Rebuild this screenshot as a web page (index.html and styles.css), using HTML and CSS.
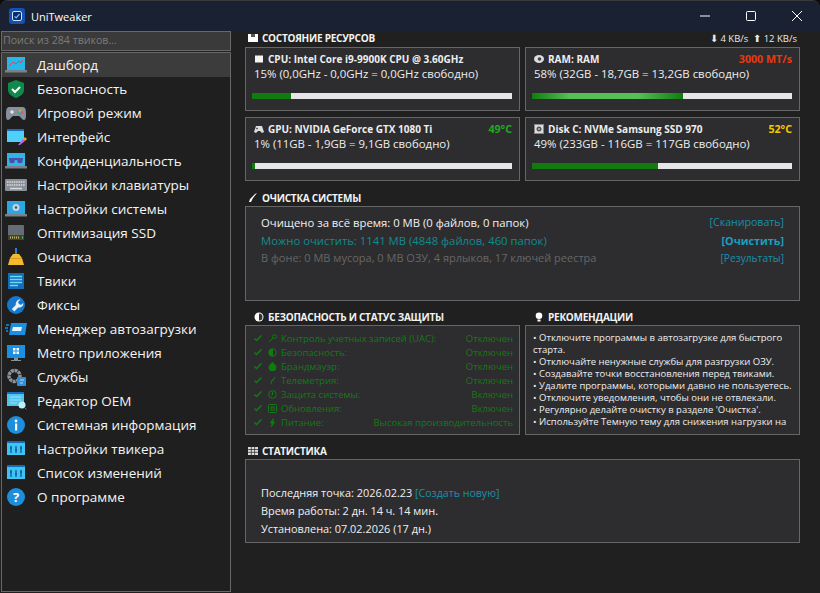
FILE: index.html
```html
<!DOCTYPE html>
<html lang="ru">
<head>
<meta charset="utf-8">
<title>UniTweaker</title>
<link rel="stylesheet" href="styles.css">
</head>
<body>
<div class="window">
  <header class="titlebar">
    <svg class="app-icon" viewBox="0 0 16 16"><rect width="16" height="16" rx="3" fill="#1552b0"/><rect x="3.5" y="3.5" width="9" height="9" rx="1.5" fill="#0d2a66" stroke="#cfe4ff"/><path d="M5.5 8.5l1.7 1.5 3.3-4" fill="none" stroke="#6fc0ff" stroke-width="1.2"/></svg>
    <span class="app-name">UniTweaker</span>
    <div class="controls">
      <button class="ctl"><svg viewBox="0 0 12 12" width="12" height="12"><path d="M1 6h10" stroke="#fff"/></svg></button>
      <button class="ctl"><svg viewBox="0 0 12 12" width="12" height="12"><rect x="1.5" y="1.5" width="9" height="9" rx="1" fill="none" stroke="#fff"/></svg></button>
      <button class="ctl"><svg viewBox="0 0 12 12" width="12" height="12"><path d="M1 1l10 10M11 1L1 11" stroke="#fff"/></svg></button>
    </div>
  </header>
  <div class="app-body">
    <aside class="sidebar">
      <div class="search">Поиск из 284 твиков...</div>
      <nav class="nav">
        <a class="nav-item active"><svg class="ni" viewBox="0 0 22 18"><rect x="2" y="1" width="18" height="13" fill="#29b6e8"/><path d="M4 10l4-4 3 2 3-3 2 2 2-3" fill="none" stroke="#d04a6a" stroke-width="1"/><rect y="14" width="22" height="2.500" fill="#78808a"/></svg>Дашборд</a>
        <a class="nav-item"><svg class="ni" viewBox="0 0 22 18"><path d="M11 0l8 3v7c0 4-4 6.500-8 8-4-1.500-8-4-8-8V3z" fill="#0f8a4c"/><path d="M7 9l3 3 5-5" fill="none" stroke="#fff" stroke-width="2"/></svg>Безопасность</a>
        <a class="nav-item"><svg class="ni" viewBox="0 0 22 18"><path d="M4 3h14c2 0 3 2 3 6s0 7-2 7-3-3-5-4H8c-2 1-3 4-5 4s-2-3-2-7 1-6 3-6z" fill="#87909c"/><path d="M5 8h4M7 6v4" stroke="#fff"/><circle cx="15" cy="6.500" r="1" fill="#e8b030"/><circle cx="17" cy="8.500" r="1" fill="#e0503c"/><circle cx="13" cy="8.500" r="1" fill="#3cb060"/><circle cx="15" cy="10" r="1" fill="#3c90e0"/></svg>Игровой режим</a>
        <a class="nav-item"><svg class="ni" viewBox="0 0 22 18"><rect x="2" y="1" width="17" height="13" fill="#4fd0f8"/><rect x="2" y="1" width="17" height="2" fill="#1a6fc0"/><path d="M13 17l5-6 2 2-5 4z" fill="#c060e0"/><path d="M18 11l2-2 2 2-2 2z" fill="#f0a020"/></svg>Интерфейс</a>
        <a class="nav-item"><svg class="ni" viewBox="0 0 22 18"><rect x="2" y="1" width="18" height="13" fill="#2fb4e4"/><path d="M4 6h14v1l-1 4h-4l-1-3h-2l-1 3H5L4 7z" fill="#4a4ea8"/><rect y="14" width="22" height="2.500" fill="#78808a"/></svg>Конфиденциальность</a>
        <a class="nav-item"><svg class="ni" viewBox="0 0 22 18"><rect y="3" width="22" height="12" rx="1" fill="#8a9098"/><path d="M2 6h18M2 9h18" stroke="#d8dce0" stroke-dasharray="1.500 .8" stroke-width="1.500"/><path d="M5 12.500h12" stroke="#d8dce0" stroke-width="1.500"/></svg>Настройки клавиатуры</a>
        <a class="nav-item"><svg class="ni" viewBox="0 0 22 18"><rect x="2" y="1" width="18" height="13" fill="#2aa6e0"/><circle cx="11" cy="7.500" r="3.500" fill="#c8d4e0"/><circle cx="11" cy="7.500" r="1.300" fill="#3a5a80"/><rect y="14" width="22" height="2.500" fill="#78808a"/></svg>Настройки системы</a>
        <a class="nav-item"><svg class="ni" viewBox="0 0 22 18"><rect x="3" y="1" width="16" height="15" rx="1" fill="#666c74"/><rect x="3" y="11" width="16" height="5" fill="#3e4248"/><path d="M5 13.500h10" stroke="#c8c040" stroke-width="2" stroke-dasharray="1 1"/><path d="M17 13.500h1" stroke="#50d050" stroke-width="2"/></svg>Оптимизация SSD</a>
        <a class="nav-item"><svg class="ni" viewBox="0 0 22 18"><rect x="10" y="0" width="2" height="7" fill="#2f7fd0"/><path d="M8 6h6l3 4 2 7H3l2-7z" fill="#f4bc2c"/><path d="M5 10.500h12" stroke="#d89a18"/></svg>Очистка</a>
        <a class="nav-item"><svg class="ni" viewBox="0 0 22 18"><rect x="3" y="1" width="16" height="16" fill="#0f6fb8"/><path d="M5 4.500h12M5 7.500h12M5 10.500h12M5 13.500h8" stroke="#6fd4ff" stroke-width="1.500"/></svg>Твики</a>
        <a class="nav-item"><svg class="ni" viewBox="0 0 22 18"><circle cx="11" cy="9" r="9" fill="#1478cc"/><path d="M15.500 3.500l-2.500 2.500 1 2 2 1 2.300-2c.3 3-2.300 5-5 4.500l-4 4-2.500-2.500 4-4c-.5-3 2-6 4.700-5.500z" fill="#e8f0f8"/></svg>Фиксы</a>
        <a class="nav-item"><svg class="ni" viewBox="0 0 22 18"><path d="M6 3h16l-2 12H4z" fill="#1b8fe0"/><path d="M8 7h9l-1 4H7z" fill="#e8f4ff"/><path d="M1 5h3M0 8h3M1 11h2" stroke="#1b8fe0" stroke-width="1.300"/></svg>Менеджер автозагрузки</a>
        <a class="nav-item"><svg class="ni" viewBox="0 0 22 18"><rect x="2" y="1" width="18" height="13" fill="#1b8fe0"/><path d="M8 4h2.500v2.500H8zM11.500 4H14v2.500h-2.500zM8 7.500h2.500V10H8zM11.500 7.500H14V10h-2.500z" fill="#fff"/><rect x="9" y="14" width="4" height="2" fill="#8a9098"/><rect x="6" y="16" width="10" height="1" fill="#8a9098"/></svg>Metro приложения</a>
        <a class="nav-item"><svg class="ni" viewBox="0 0 22 18"><circle cx="9.500" cy="8" r="5.500" fill="none" stroke="#8a929c" stroke-width="3.500" stroke-dasharray="3 .6"/><rect x="12" y="9" width="9" height="9" rx="1" fill="#2f8fd8"/><path d="M15 12h4M15 15h3" stroke="#a8dcff"/></svg>Службы</a>
        <a class="nav-item"><svg class="ni" viewBox="0 0 22 18"><rect x="2" y="0" width="17" height="14" fill="#4fc4ec"/><rect x="2" y="0" width="17" height="2" fill="#1a6fc0"/><path d="M5 5h11M5 8h11M5 11h7" stroke="#9ee4fa"/><circle cx="17" cy="13" r="3.500" fill="#bfefff"/><path d="M19.500 15.500l2 2" stroke="#1a8fd0"/></svg>Редактор OEM</a>
        <a class="nav-item"><svg class="ni" viewBox="0 0 22 18"><circle cx="11" cy="9" r="9" fill="#1c8edc"/><rect x="10" y="7.500" width="2.200" height="7" fill="#fff"/><circle cx="11" cy="5" r="1.400" fill="#fff"/></svg>Системная информация</a>
        <a class="nav-item"><svg class="ni" viewBox="0 0 22 18"><rect x="2" y="1" width="18" height="14" fill="#3ec4f2"/><rect x="2" y="1" width="18" height="2" fill="#0f6fb8"/><path d="M6 6v7M11 6v7M16 6v7" stroke="#0f5a9c" stroke-width="1.300"/><path d="M5 8h2M10 10h2M15 8h2" stroke="#0f5a9c" stroke-width="1.500"/></svg>Настройки твикера</a>
        <a class="nav-item"><svg class="ni" viewBox="0 0 22 18"><rect x="2" y="1" width="18" height="14" fill="#3ec4f2"/><rect x="2" y="1" width="18" height="2" fill="#0f6fb8"/><path d="M6 6v7M11 6v7M16 6v7" stroke="#0f5a9c" stroke-width="1.300"/><path d="M5 8h2M10 10h2M15 8h2" stroke="#0f5a9c" stroke-width="1.500"/></svg>Список изменений</a>
        <a class="nav-item"><svg class="ni" viewBox="0 0 22 18"><circle cx="11" cy="9" r="9" fill="#1c8edc"/><text x="11" y="13.500" text-anchor="middle" class="q">?</text></svg>О программе</a>
      </nav>
    </aside>
    <main class="main">
      <div class="sec-head">
        <span class="sec-title"><svg class="gl" viewBox="0 0 10 10"><path d="M0 1h10v8H0z" fill="#fff"/><path d="M3 1v3h4V1z" fill="#555"/></svg>СОСТОЯНИЕ РЕСУРСОВ</span>
        <span class="net">⬇ 4 KB/s&nbsp; ⬆ 12 KB/s</span>
      </div>
      <div class="cards">
        <section class="card">
          <div class="card-top"><span class="card-name"><svg class="gl" viewBox="0 0 10 10"><rect x="1" y="1.500" width="8" height="7" fill="#f4f4f4"/></svg>CPU: Intel Core i9-9900K CPU @ 3.60GHz</span></div>
          <div class="card-line">15% (0,0GHz - 0,0GHz = 0,0GHz свободно)</div>
          <div class="bar"><div class="fill" style="width:15%"></div></div>
        </section>
        <section class="card">
          <div class="card-top"><span class="card-name"><svg class="gl" viewBox="0 0 10 10"><ellipse cx="5" cy="5" rx="5" ry="4" fill="#ddd"/><circle cx="5.500" cy="5" r="1.800" fill="#444"/></svg>RAM: RAM</span><span class="temp red">3000 MT/s</span></div>
          <div class="card-line">58% (32GB - 18,7GB = 13,2GB свободно)</div>
          <div class="bar"><div class="fill glow" style="width:58%"></div></div>
        </section>
        <section class="card">
          <div class="card-top"><span class="card-name"><svg class="gl" viewBox="0 0 10 10"><path d="M2 2h6l2 6-2 1-2-2H4L2 9 0 8z" fill="#ddd"/><path d="M3 3.500v2M2 4.500h2" stroke="#444" stroke-width=".7"/></svg>GPU: NVIDIA GeForce GTX 1080 Ti</span><span class="temp green">49°C</span></div>
          <div class="card-line">1% (11GB - 1,9GB = 9,1GB свободно)</div>
          <div class="bar"><div class="fill" style="width:3px"></div></div>
        </section>
        <section class="card">
          <div class="card-top"><span class="card-name"><svg class="gl" viewBox="0 0 10 10"><rect x=".5" y=".5" width="9" height="9" fill="#ddd" stroke="#888"/><circle cx="5" cy="5" r="2.500" fill="#555"/><circle cx="5" cy="5" r=".8" fill="#fff"/></svg>Disk C: NVMe Samsung SSD 970</span><span class="temp yellow">52°C</span></div>
          <div class="card-line">49% (233GB - 116GB = 117GB свободно)</div>
          <div class="bar"><div class="fill" style="width:48.500%"></div></div>
        </section>
      </div>

      <div class="sec-head clean-head"><span class="sec-title"><svg class="gl" viewBox="0 0 10 10"><path d="M9 0L5 5 3 9H1l1-3 5-5z" fill="#fff"/></svg>ОЧИСТКА СИСТЕМЫ</span></div>
      <section class="box clean">
        <div class="clean-row r1"><span>Очищено за всё время: 0 MB (0 файлов, 0 папок)</span><a class="link">[Сканировать]</a></div>
        <div class="clean-row r2"><span class="teal">Можно очистить: 1141 MB (4848 файлов, 460 папок)</span><a class="link strong">[Очистить]</a></div>
        <div class="clean-row r3"><span class="dim">В фоне: 0 MB мусора, 0 MB ОЗУ, 4 ярлыков, 17 ключей реестра</span><a class="link small">[Результаты]</a></div>
      </section>

      <div class="two-head">
        <span class="sec-title indent"><svg class="gl" viewBox="0 0 10 10"><circle cx="5" cy="5" r="4.500" fill="#fff"/><path d="M5 1.500a3.500 3.500 0 0 1 0 7z" fill="#333"/></svg>БЕЗОПАСНОСТЬ И СТАТУС ЗАЩИТЫ</span>
        <span class="sec-title indent"><svg class="gl" viewBox="0 0 10 10"><circle cx="5" cy="3.800" r="3.300" fill="#fff"/><rect x="3.500" y="7.500" width="3" height="2" fill="#fff"/></svg>РЕКОМЕНДАЦИИ</span>
      </div>
      <div class="two">
        <section class="box sec">
          <div class="sec-row"><svg class="ck" viewBox="0 0 8 8"><path d="M.5 4.500l2 2L7.500 1.500" fill="none" stroke-width="1.500"/></svg><svg class="si" viewBox="0 0 9 9"><circle cx="6.500" cy="2.500" r="1.800" fill="none"/><path d="M5 4L1 8" fill="none"/></svg><span class="sl">Контроль учетных записей (UAC):</span><span>Отключен</span></div>
          <div class="sec-row"><svg class="ck" viewBox="0 0 8 8"><path d="M.5 4.500l2 2L7.500 1.500" fill="none" stroke-width="1.500"/></svg><svg class="si" viewBox="0 0 9 9"><circle cx="4.500" cy="4.500" r="3.800" fill="none"/><path d="M4.500 1a3.500 3.500 0 0 0 0 7z" class="sf"/></svg><span class="sl">Безопасность:</span><span>Отключен</span></div>
          <div class="sec-row"><svg class="ck" viewBox="0 0 8 8"><path d="M.5 4.500l2 2L7.500 1.500" fill="none" stroke-width="1.500"/></svg><svg class="si" viewBox="0 0 9 9"><path d="M4.500 .5c3 2 3.500 4 3.500 5a3.500 3.500 0 0 1-7 0c0-1 .5-3 3.500-5z" class="sf"/></svg><span class="sl">Брандмауэр:</span><span>Отключен</span></div>
          <div class="sec-row"><svg class="ck" viewBox="0 0 8 8"><path d="M.5 4.500l2 2L7.500 1.500" fill="none" stroke-width="1.500"/></svg><svg class="si" viewBox="0 0 9 9"><path d="M3 8l1-4M5 4l2-3M4 4h2" fill="none"/></svg><span class="sl">Телеметрия:</span><span>Отключен</span></div>
          <div class="sec-row"><svg class="ck" viewBox="0 0 8 8"><path d="M.5 4.500l2 2L7.500 1.500" fill="none" stroke-width="1.500"/></svg><svg class="si" viewBox="0 0 9 9"><circle cx="4.500" cy="4.500" r="3.800" fill="none"/><path d="M4.500 2v3h-1" fill="none"/></svg><span class="sl">Защита системы:</span><span>Включен</span></div>
          <div class="sec-row"><svg class="ck" viewBox="0 0 8 8"><path d="M.5 4.500l2 2L7.500 1.500" fill="none" stroke-width="1.500"/></svg><svg class="si" viewBox="0 0 9 9"><rect x=".5" y=".5" width="8" height="8" rx="1" fill="none"/><rect x="3" y="3" width="3" height="3" fill="none"/></svg><span class="sl">Обновления:</span><span>Включен</span></div>
          <div class="sec-row"><svg class="ck" viewBox="0 0 8 8"><path d="M.5 4.500l2 2L7.500 1.500" fill="none" stroke-width="1.500"/></svg><svg class="si" viewBox="0 0 9 9"><path d="M5.500 .5L2.500 5H4.500L3.500 8.500 6.500 4H4.500z" class="sf"/></svg><span class="sl">Питание:</span><span>Высокая производительность</span></div>
        </section>
        <section class="box tips">
          <p class="tips-text">• Отключите программы в автозагрузке для быстрого старта.<br>• Отключайте ненужные службы для разгрузки ОЗУ.<br>• Создавайте точки восстановления перед твиками.<br>• Удалите программы, которыми давно не пользуетесь.<br>• Отключите уведомления, чтобы они не отвлекали.<br>• Регулярно делайте очистку в разделе 'Очистка'.<br>• Используйте Темную тему для снижения нагрузки на</p>
        </section>
      </div>

      <div class="sec-head stat-head"><span class="sec-title"><svg class="gl" viewBox="0 0 10 10"><path d="M0 1h10v8H0z" fill="#ddd"/><path d="M3.300 1v8M6.600 1v8M0 3.500h10M0 6.300h10" stroke="#333" stroke-width=".8"/></svg>СТАТИСТИКА</span></div>
      <section class="box stats">
        <div class="stat-row">Последняя точка: 2026.02.23 <a class="link">[Создать новую]</a></div>
        <div class="stat-row">Время работы: 2 дн. 14 ч. 14 мин.</div>
        <div class="stat-row">Установлена: 07.02.2026 (17 дн.)</div>
      </section>
    </main>
  </div>
</div>
</body>
</html>
```

FILE: styles.css
```css
* { box-sizing: border-box; }
html, body { margin: 0; height: 100%; background: #0c0c0c; overflow: hidden; }
body { font-family: "Open Sans", "Noto Sans", sans-serif; color: #f0f0f0; }

.window { width: 820px; height: 593px; display: flex; flex-direction: column; border-top: 1px solid #3a3a3a; border-radius: 8px 8px 0 0; overflow: hidden; background: #202020; }

.titlebar { height: 30px; flex: none; display: flex; align-items: center; background: #1a2133; padding-left: 9px; }
.app-icon { width: 16px; height: 16px; margin-right: 6px; }
.app-name { font-size: 11px; color: #fff; }
.controls { margin-left: auto; display: flex; height: 100%; }
.ctl { width: 46px; height: 30px; background: none; border: 0; padding: 0; display: flex; align-items: center; justify-content: center; }

.app-body { flex: 1; display: flex; min-height: 0; }

.sidebar { width: 231px; flex: none; padding-left: 1px; display: flex; flex-direction: column; gap: 1px; }
.search { height: 20px; background: #3a3a3a; border: 1px solid #686868; color: #7c7c7c; font-size: 10.600px; line-height: 17px; padding-left: 1px; }
.nav { flex: 1; background: #1f1f1f; border: 1px solid #686868; margin-bottom: 1px; }
.nav-item { height: 24px; display: flex; align-items: center; font-size: 13.500px; color: #f4f4f4; padding-left: 3px; }
.nav-item.active { background: #3c3c3c; }
.ni { width: 22px; height: 18px; margin-right: 10px; flex: none; }
.q { font: bold 13px "Open Sans", sans-serif; fill: #fff; }

.main { flex: 1; padding: 0 20px 0 14px; min-width: 0; }
.sec-head, .two-head { display: flex; justify-content: space-between; align-items: center; height: 14px; }
.sec-title { display: flex; align-items: center; font-size: 10px; letter-spacing: -.25px; font-weight: 700; color: #f2f2f2; padding-left: 3px; white-space: nowrap; }
.indent { padding-left: 9px; }
.gl { width: 10px; height: 10px; margin-right: 4px; flex: none; }
.net { font-size: 9.500px; color: #eaeaea; margin-right: 3px; }

.cards { display: grid; grid-template-columns: 275px 275px; column-gap: 5px; row-gap: 6px; margin-top: 2px; }
.card { height: 64px; background: #2d2d30; border: 1px solid #666; padding: 3px 7px 0 6px; }
.card-top { display: flex; justify-content: space-between; align-items: center; height: 15px; }
.card-name { display: flex; align-items: center; font-size: 10px; font-weight: 700; color: #eee; padding-left: 2px; }
.temp { font-size: 10.700px; font-weight: 700; }
.red { color: #e83a10; }
.green { color: #22a822; }
.yellow { color: #f2c800; }
.card-line { font-size: 11.400px; line-height: 16px; color: #eee; padding-left: 2px; white-space: nowrap; }
.bar { height: 6px; background: #e6e6e6; margin-top: 11px; }
.fill { height: 100%; background: #107c10; }
.glow { background: linear-gradient(90deg, #107c10 0, #55c055 25%, #55c055 70%, #107c10 100%); }

.clean-head { margin-top: 10px; }
.box { background: #2d2d30; border: 1px solid #666; }
.clean { height: 95px; margin-top: 1px; padding: 6px 15px; font-size: 11.300px; }
.clean-row { display: flex; justify-content: space-between; align-items: center; }
.r1 { height: 18px; }
.r2 { height: 18px; }
.r3 { height: 17px; font-size: 11px; }
.teal { color: #0f8c8c; }
.dim { color: #666; }
.link { color: #1890a8; font-size: 10.600px; }
.strong { font-weight: 700; font-size: 10.800px; color: #18a0c0; }
.small { font-size: 10.200px; }

.two-head { margin-top: 9px; display: grid; grid-template-columns: 275px 275px; column-gap: 5px; }
.two { display: grid; grid-template-columns: 275px 275px; column-gap: 5px; margin-top: 1px; }
.sec, .tips { height: 110px; overflow: hidden; }
.sec { padding: 5px 6px 0 8px; font-size: 9.500px; color: #107c10; }
.sec-row { height: 14px; display: flex; align-items: center; white-space: nowrap; }
.sec-row span:last-child { margin-left: auto; }
.ck { width: 8px; height: 8px; margin-right: 6px; stroke: #107c10; }
.si { width: 9px; height: 9px; margin-right: 4px; stroke: #107c10; stroke-width: 1; }
.sf { fill: #107c10; }
.tips { padding: 6px 5px 0 7px; }
.tips-text { margin: 0; font-size: 9.500px; line-height: 12px; color: #eee; }

.stat-head { margin-top: 9px; }
.stats { height: 84px; margin-top: 1px; padding: 24px 15px 0; font-size: 10.900px; }
.stat-row { height: 18px; line-height: 18px; white-space: nowrap; }
```
